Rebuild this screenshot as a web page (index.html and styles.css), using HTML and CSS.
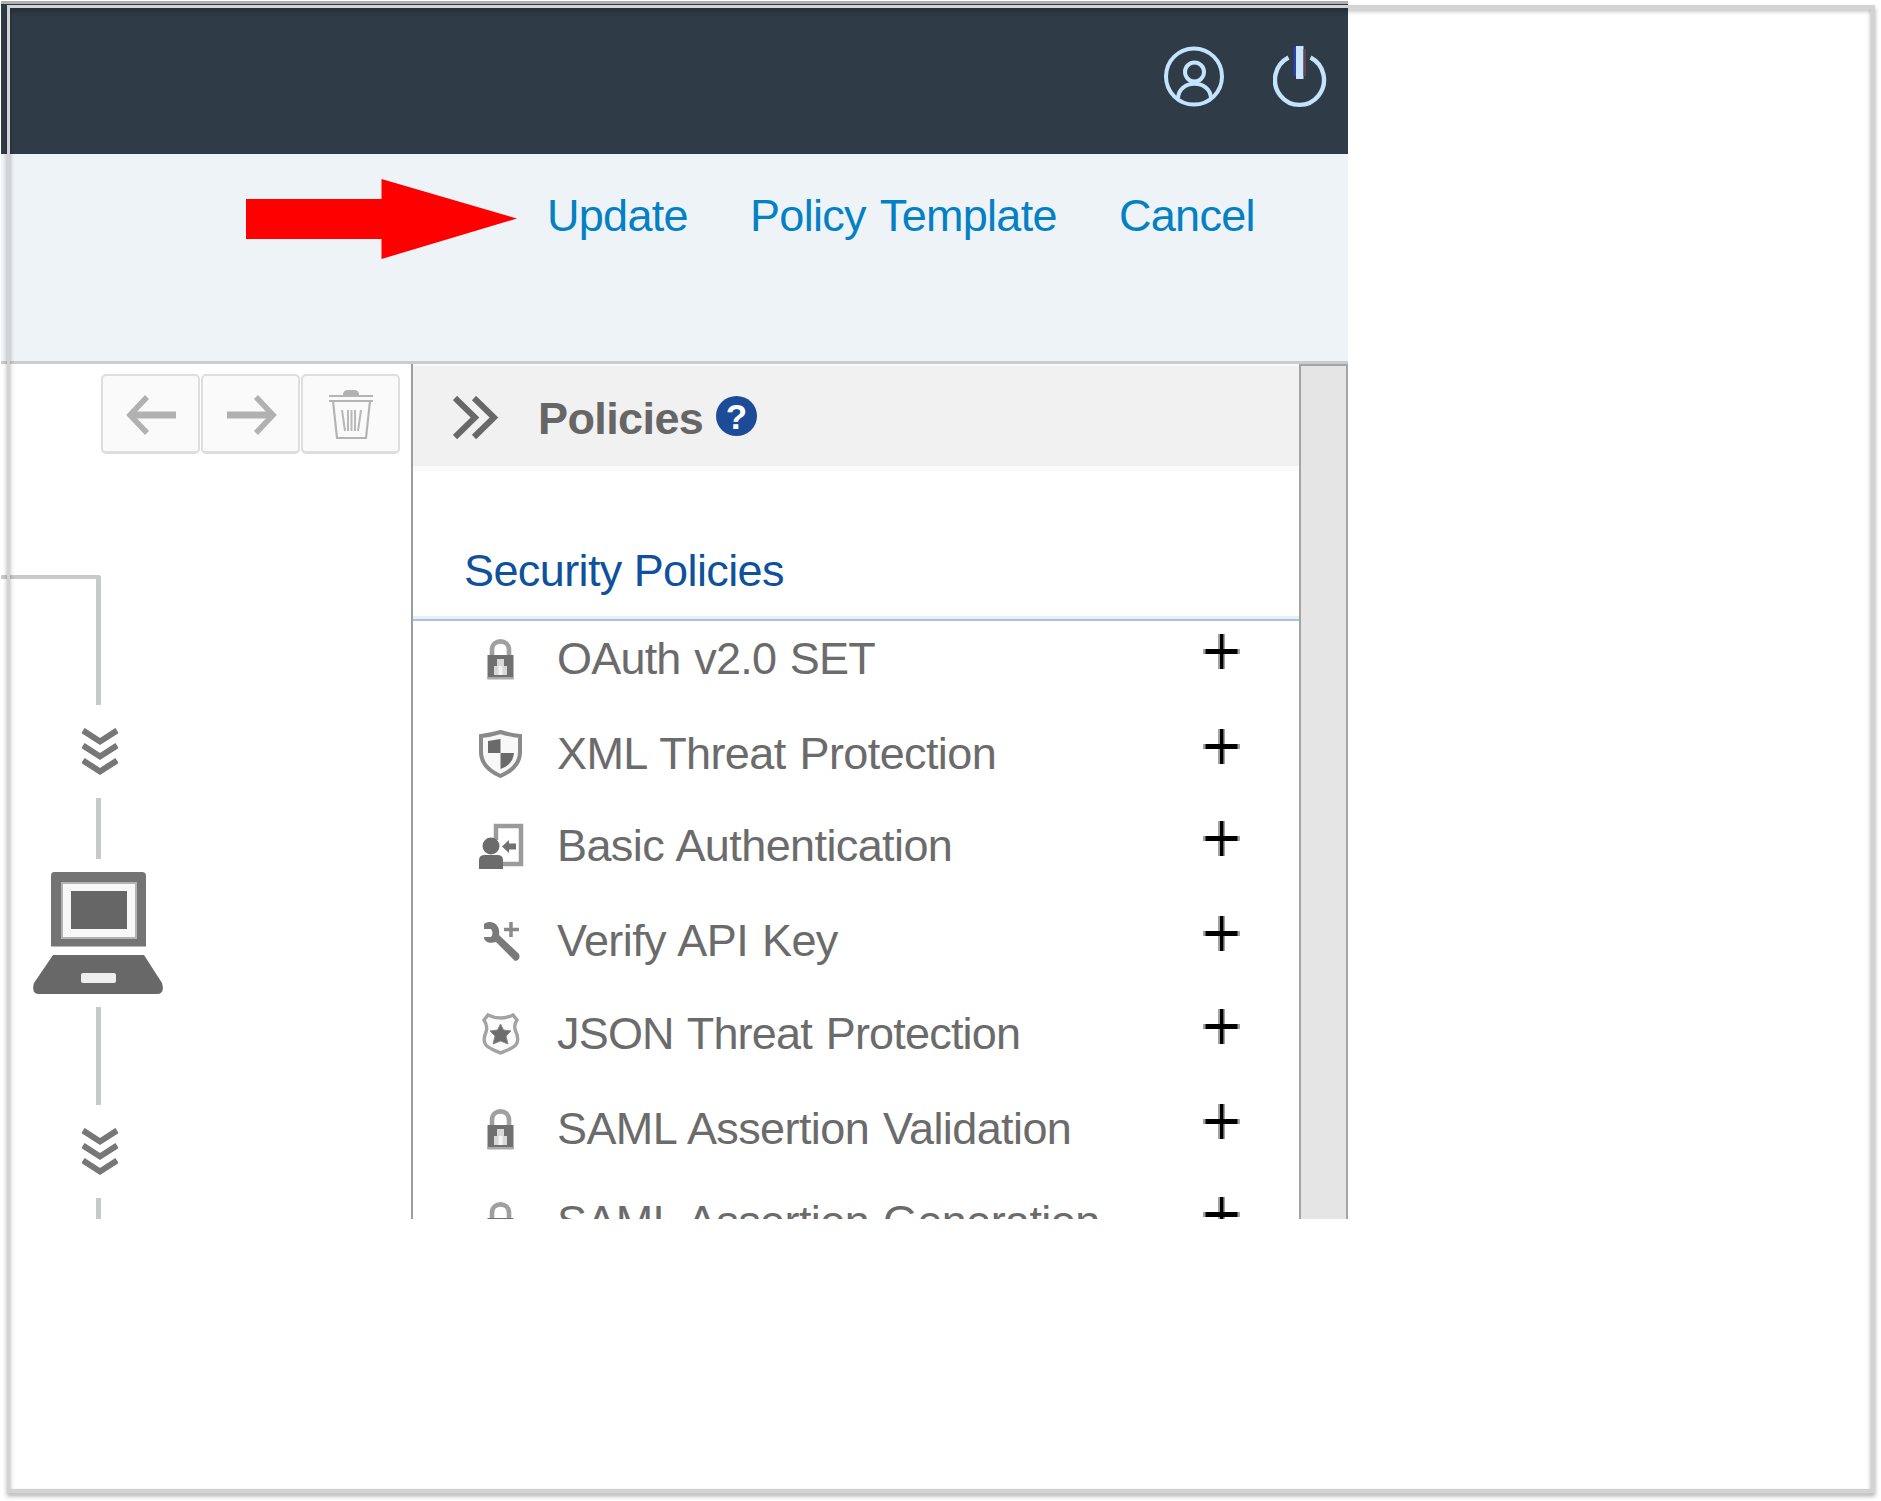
FILE: index.html
```html
<!DOCTYPE html>
<html lang="en">
<head>
<meta charset="utf-8">
<title>Policy editor</title>
<link rel="stylesheet" href="styles.css">
</head>
<body>
<svg class="defs" aria-hidden="true">
  <symbol id="lock" viewBox="0 0 46 48">
    <path d="M14 21V15C14 3.500 31 3.500 31 15V21" fill="none" stroke="#a0a0a0" stroke-width="4.600"/>
    <path d="M9.500 20H35.500V44H9.500Z" fill="#707070"/>
    <path d="M19 24h7v7h3v9H16v-9h3z" fill="#d8d8d8"/>
    <path d="M20.500 31h4v9h-4z" fill="#f4f4f4"/>
    <path d="M9.500 42H35.500V44.500H9.500Z" fill="#aaa"/>
  </symbol>
  <symbol id="plus" viewBox="0 0 40 36">
    <path d="M16 0h7v35h-7z" fill="#a3a3a3"/>
    <path d="M1 15h37v5H1z" fill="#a3a3a3"/>
    <path d="M18 0h3.4v35H18zM3.5 15h32v5h-32z" fill="#000"/>
  </symbol>
  <symbol id="flow" viewBox="0 0 36 50">
    <path d="M1 2.500L18 13.500L35 2.500M1 17.500L18 28.500L35 17.500M1 32.500L18 43.500L35 32.500" fill="none" stroke="#777" stroke-width="6"/>
  </symbol>
</svg>

<main class="app">
  <header class="topbar">
    <svg class="user" viewBox="0 0 62 62"><g fill="none" stroke="#c3e4fc" stroke-width="4"><circle cx="31" cy="30.500" r="28"/><circle cx="31.500" cy="26" r="9.500"/><path d="M15 52C16 33 47 33 48 52"/></g></svg>
    <svg class="power" viewBox="0 0 54 62"><path d="M15.500 11.500A24.500 25 0 1 0 37.500 11.500" fill="none" stroke="#c3e4fc" stroke-width="4.400"/><path d="M20.500 1h2.500v29h-2.500z" fill="#2f3fae"/><path d="M23 0h7.500v33H23z" fill="#c8e6ff"/><path d="M30.500 3h2.500v27h-2.500z" fill="#674250"/></svg>
  </header>

  <nav class="actions">
    <svg class="pointer" viewBox="0 0 271 80"><path d="M0 20H135.500V0L271 39.500L135.500 80V60H0Z" fill="#f00"/></svg>
    <a class="update">Update</a>
    <a class="template">Policy Template</a>
    <a class="cancel">Cancel</a>
  </nav>

  <div class="work">
    <section class="canvas">
      <div class="tools">
        <button><svg viewBox="0 0 52 40"><path d="M5 20H51" stroke="#b1b1b1" stroke-width="7"/><path d="M22 2L5 20L22 38" fill="none" stroke="#b1b1b1" stroke-width="5.500"/></svg></button>
        <button><svg viewBox="0 0 52 40"><path d="M2 20H47" stroke="#b1b1b1" stroke-width="7"/><path d="M31 2L48 20L31 38" fill="none" stroke="#b1b1b1" stroke-width="5.500"/></svg></button>
        <button><svg class="trash" viewBox="0 0 46 52"><path d="M15 6Q15 1 20 1H26Q31 1 31 6Z" fill="#b1b1b1"/><g fill="none" stroke="#b4b4b4" stroke-width="2.200"><path d="M1 7H45M1 12H45"/><path d="M5 12L9 49H38L42 12"/><path d="M14 21L17 42M20 21V42M23.500 21V42M27 21V42M33 21L30 42" stroke="#b8b8b8" stroke-width="2"/></g></svg></button>
      </div>
      <div class="track">
        <div class="elbow"></div>
        <svg class="chev"><use href="#flow"/></svg>
        <div class="line line-a"></div>
        <svg class="laptop" viewBox="0 0 132 124">
          <path d="M22 1H110Q114 1 114 5V75.500H19V5Q19 1 22 1Z" fill="#747474"/>
          <path d="M29 11H105V68H29Z" fill="#b4b4b4"/>
          <path d="M31 13H103V66H31Z" fill="#f8f8f8"/>
          <path d="M39 20H95V58H39Z" fill="#666"/>
          <path d="M21 84H112L130 112Q133 123 125 123H7Q-1 123 2 112Z" fill="#686868"/>
          <rect x="49" y="102" width="35" height="10" rx="2" fill="#eee"/>
        </svg>
        <div class="line line-b"></div>
        <svg class="chev"><use href="#flow"/></svg>
        <div class="line line-c"></div>
      </div>
    </section>

    <aside class="panel">
      <div class="panel-head">
        <svg class="collapse" viewBox="0 0 46 44"><path d="M2 2L22 21.500L2 41M21 2L41 21.500L21 41" fill="none" stroke="#686868" stroke-width="6"/></svg>
        <h1>Policies</h1>
        <span class="help">?</span>
      </div>
      <h2><span>Security Policies</span></h2>
      <ul>
        <li class="oauth"><svg class="ico"><use href="#lock"/></svg><span>OAuth v2.0 SET</span><svg class="plus"><use href="#plus"/></svg></li>
        <li><svg class="ico" viewBox="0 0 46 48"><path d="M3 6Q13 5 22.500 2Q32 5 42 6V22C42 34 34 41 22.500 46C11 41 3 34 3 22Z" fill="#f8f8f8" stroke="#8a8a8a" stroke-width="4"/><path d="M10 11L22.500 9V23H10Z" fill="#6a6a6a"/><path d="M22.500 23H36C35 31 31 36 22.500 39Z" fill="#6a6a6a"/></svg><span>XML Threat Protection</span><svg class="plus"><use href="#plus"/></svg></li>
        <li><svg class="ico" viewBox="0 0 46 48"><path d="M18 18V4H43V42H25" fill="none" stroke="#9b9b9b" stroke-width="4.500"/><circle cx="13" cy="24" r="8.500" fill="#6c6c6c"/><path d="M1 47V38Q1 33 7 33H19Q25 33 25 38V47Z" fill="#6c6c6c"/><path d="M24 24.500L31 18V21.500H38V27.500H31V31Z" fill="#707070"/></svg><span>Basic Authentication</span><svg class="plus"><use href="#plus"/></svg></li>
        <li><svg class="ico" viewBox="0 0 46 48"><path d="M6 7C13 2 23 7 21 18L41 37Q43 43 37 44L18 25C12 27 6 25 6 20L13 20Q16 16 13 12L6 12Z" fill="#7a7a7a"/><path d="M33 5V20M26 12.500H41" stroke="#8a8a8a" stroke-width="3.500"/></svg><span>Verify API Key</span><svg class="plus"><use href="#plus"/></svg></li>
        <li class="json"><svg class="ico" viewBox="0 0 46 48"><path d="M10 5Q16 8 23 8Q29 8 35 5L39 10Q35 16 38 22C44 36 34 38 22.500 43C11 38 2 36 8 22Q10 16 6 10Z" fill="#fbfbfb" stroke="#a3a3a3" stroke-width="3.400"/><path d="M22.500 14L25.500 20L33 21L28 26L30 34L22.500 31L15 34L17 26L12 21L19.500 20Z" fill="#6d6d6d" stroke="#8a8a8a"/></svg><span>JSON Threat Protection</span><svg class="plus"><use href="#plus"/></svg></li>
        <li><svg class="ico"><use href="#lock"/></svg><span>SAML Assertion Validation</span><svg class="plus"><use href="#plus"/></svg></li>
        <li><svg class="ico"><use href="#lock"/></svg><span>SAML Assertion Generation</span><svg class="plus"><use href="#plus"/></svg></li>
      </ul>
    </aside>
    <div class="scrollbar"></div>
  </div>
</main>
<div class="frame"></div>
</body>
</html>
```
FILE: styles.css
```css
* { box-sizing: border-box; }
body {
  margin: 0;
  width: 1881px;
  height: 1501px;
  padding: 1px;
  overflow: hidden;
  position: relative;
  background: #fff;
  font-family: "Liberation Sans", Arial, sans-serif;
}
svg { display: block; flex: none; }
.defs { position: absolute; width: 0; height: 0; }

.app {
  width: 1347px;
  height: 1218px;
  display: flex;
  flex-direction: column;
  overflow: hidden;
}

.topbar {
  height: 153px;
  flex: none;
  display: flex;
  justify-content: flex-end;
  padding: 42px 21px 0 0;
  gap: 48px;
  background: #2f3b47;
  border-top: 3px solid #b0b0b0;
}
.user { width: 62px; height: 62px; }
.power { width: 54px; height: 62px; }

.actions {
  height: 210px;
  flex: none;
  display: flex;
  align-items: flex-start;
  padding: 25px 0 0 245px;
  background: #eef3f8;
  border-bottom: 3px solid #cbcccd;
  color: #0480c4;
  font-size: 45px;
  line-height: 74px;
  letter-spacing: -0.7px;
  word-spacing: 3px;
  white-space: nowrap;
}
.pointer { width: 271px; height: 80px; }
.update { margin-left: 30px; width: 203px; }
.template { width: 369px; }

.work { flex: 1; min-height: 0; display: flex; }

.canvas { width: 410px; flex: none; }
.tools {
  display: flex;
  gap: 1px;
  height: 90px;
  padding: 10px 0 0 100px;
}
.tools button {
  width: 99px;
  height: 80px;
  padding: 2px 0 0;
  display: grid;
  place-items: center;
  background: #fafafa;
  border: 2px solid #dedede;
  border-bottom-width: 3px;
  border-radius: 5px;
}
.tools button svg { width: 52px; height: 40px; }
.tools button .trash { width: 46px; height: 52px; }

.track { padding-top: 121px; }
.elbow {
  width: 100px;
  height: 130px;
  border: solid #c8c9ca;
  border-width: 4px 5px 0 0;
  border-top-right-radius: 3px;
}
.chev { width: 36px; height: 50px; margin: 23px 0 20px 81px; }
.line { width: 5px; margin-left: 95px; background: #c8c9ca; }
.line-a { height: 61px; }
.laptop { width: 132px; height: 124px; margin: 12px 0 12px 31px; }
.line-b { height: 98px; }
.line-c { height: 40px; }

.panel {
  width: 888px;
  flex: none;
  border-left: 2px solid #9d9d9d;
  overflow: hidden;
}
.panel-head {
  height: 107px;
  display: flex;
  padding: 2px 0 0 40px;
  background: #f1f1f1;
  border-top: 2px solid #f9f9f9;
  border-bottom: 5px solid #fafafa;
}
.collapse { width: 46px; height: 44px; margin-top: 28px; }
h1 {
  margin: 15px 0 0 39px;
  width: 178px;
  font-size: 45px;
  line-height: 72px;
  letter-spacing: -0.6px;
  color: #666;
}
.help {
  margin-top: 28px;
  width: 41px;
  height: 40px;
  border-radius: 50%;
  background: #1c4c98;
  color: #fff;
  font-size: 35px;
  line-height: 41px;
  font-weight: bold;
  text-align: center;
}
h2 {
  margin: 0;
  height: 150px;
  padding: 64px 0 0 51px;
  border-bottom: 2px solid #a8c2df;
  box-shadow: inset 0 -3px #e8eff7;
  color: #0f529b;
  font-size: 45px;
  font-weight: normal;
  line-height: 72px;
  letter-spacing: -0.6px;
}
ul {
  margin: 0;
  padding: 0;
  list-style: none;
  color: #6b6b6b;
  font-size: 45px;
  letter-spacing: -0.6px;
  word-spacing: 2px;
}
li {
  height: 75px;
  margin-bottom: 18px;
  display: flex;
  align-items: center;
  padding: 0 57px 0 65px;
  white-space: nowrap;
}
li:nth-child(odd) { margin-bottom: 20px; }
li:nth-child(2) { margin-bottom: 17px; }
.oauth, .json { letter-spacing: -0.8px; }
.ico { width: 46px; height: 48px; }
li span { flex: 1; margin-left: 33px; line-height: 75px; }
.plus { width: 40px; height: 36px; margin-bottom: 13px; }

.scrollbar {
  flex: 1;
  background: #e5e5e5;
  border: 2px solid #a4a4a4;
  border-bottom: 0;
}

/* Outline that overlaps the window and extends past it. */
.frame {
  position: absolute;
  left: 7px;
  top: 5px;
  width: 1868px;
  height: 1488px;
  border: 4px solid #d3d3d3;
  border-left-width: 3px;
  border-top-width: 3px;
  filter: drop-shadow(0 3px 2px rgba(0, 0, 0, .35));
}
```
